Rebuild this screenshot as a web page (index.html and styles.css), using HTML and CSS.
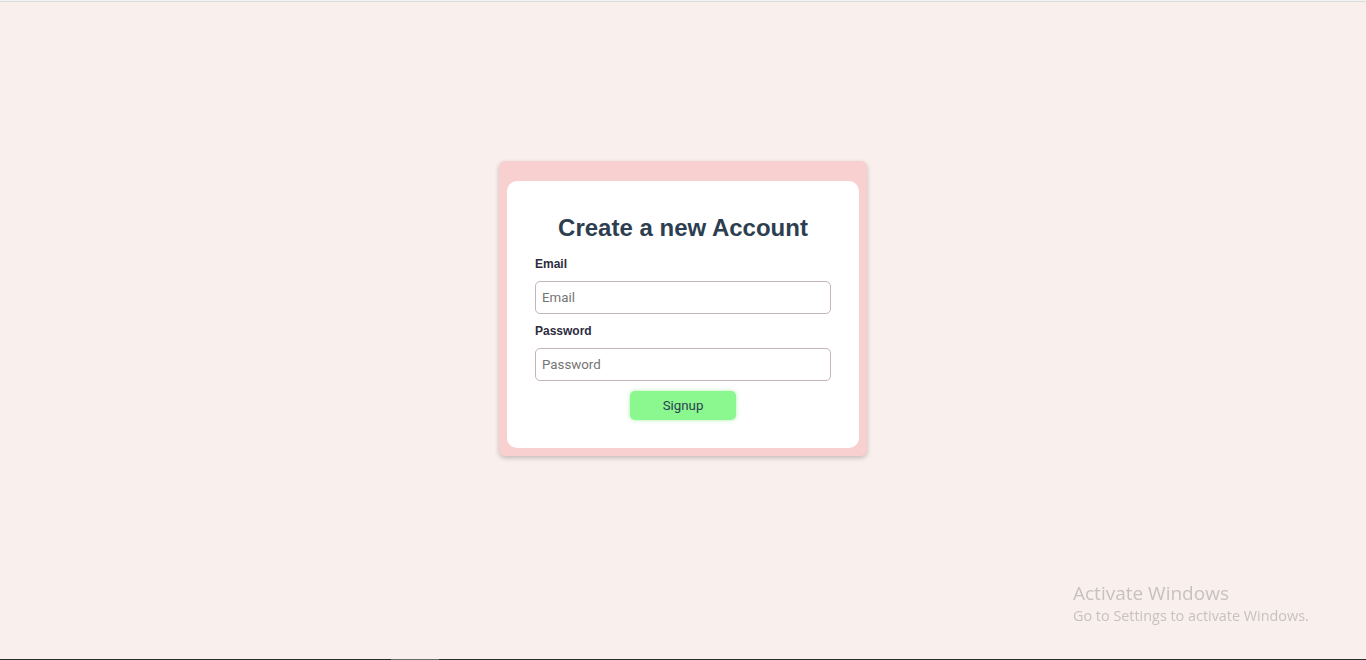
FILE: index.html
```html
<!DOCTYPE html>
<html lang="en">
<head>
<meta charset="utf-8">
<title>Signup</title>
<link rel="stylesheet" href="styles.css">
</head>
<body>
<div class="topline"></div>
<main class="page">
  <div class="card">
    <form class="form">
      <h2 class="title">Create a new Account</h2>
      <label class="label" for="email">Email</label>
      <input class="input" id="email" type="email" placeholder="Email">
      <label class="label" for="password">Password</label>
      <input class="input" id="password" type="password" placeholder="Password">
      <button class="btn" type="button">Signup</button>
    </form>
  </div>
</main>
<div class="taskbar"><span class="taskbar-seg"></span></div>
<div class="watermark">
  <div class="wm-title">Activate Windows</div>
  <div class="wm-sub">Go to Settings to activate Windows.</div>
</div>
</body>
</html>
```
FILE: styles.css
```css
* { box-sizing: border-box; }
html, body { margin: 0; padding: 0; }
body {
  height: 660px;
  background: #f9efed;
  font-family: "Liberation Sans", Arial, sans-serif;
  overflow: hidden;
  display: flex;
  flex-direction: column;
}
.topline {
  height: 2px;
  border-top: 1px solid #f3f3f3;
  border-bottom: 1px solid #dcdcdc;
  background: #f3f3f3;
  flex: none;
}
.page {
  flex: 1;
  display: flex;
  justify-content: center;
  align-items: flex-start;
  padding-top: 159px;
}
.card {
  width: 368px;
  background: #f8d0d0;
  border-radius: 6px;
  padding: 20px 8px 8px;
  box-shadow: 0 2px 5px rgba(0, 0, 0, 0.22);
}
.form {
  background: #ffffff;
  border-radius: 10px;
  padding: 33px 28px 28px;
  display: flex;
  flex-direction: column;
  align-items: stretch;
}
.title {
  margin: 0 0 15px;
  font-size: 24px;
  font-weight: bold;
  line-height: 28px;
  color: #2c3e50;
  text-align: center;
}
.label {
  font-size: 12px;
  font-weight: bold;
  line-height: 14px;
  color: #2c2c3e;
  margin-bottom: 10px;
}
.input {
  height: 33px;
  border: 1px solid #c3b5b9;
  border-radius: 5px;
  padding: 0 6px;
  font-family: Roboto, "Liberation Sans", sans-serif;
  font-size: 13.3px;
  color: #333;
  margin-bottom: 10px;
  outline: none;
}
.input::placeholder { color: #757575; }
.btn {
  align-self: center;
  width: 106px;
  height: 29px;
  border: none;
  border-radius: 5px;
  background: #8af78f;
  box-shadow: 0 0 4px rgba(120, 230, 120, 0.6);
  font-family: Roboto, "Liberation Sans", sans-serif;
  font-size: 13.3px;
  color: #2c3e50;
  cursor: pointer;
}
.taskbar {
  height: 1px;
  background: #2b2b2b;
  flex: none;
  display: flex;
}
.taskbar-seg {
  margin-left: 391px;
  width: 48px;
  background: #6a6a6a;
}
.watermark {
  position: fixed;
  left: 1073px;
  top: 581px;
  font-family: "Open Sans", "DejaVu Sans", sans-serif;
  color: #c8c1c1;
}
.wm-title { font-size: 19px; line-height: 25px; }
.wm-sub { font-size: 14.4px; line-height: 20px; }
```
